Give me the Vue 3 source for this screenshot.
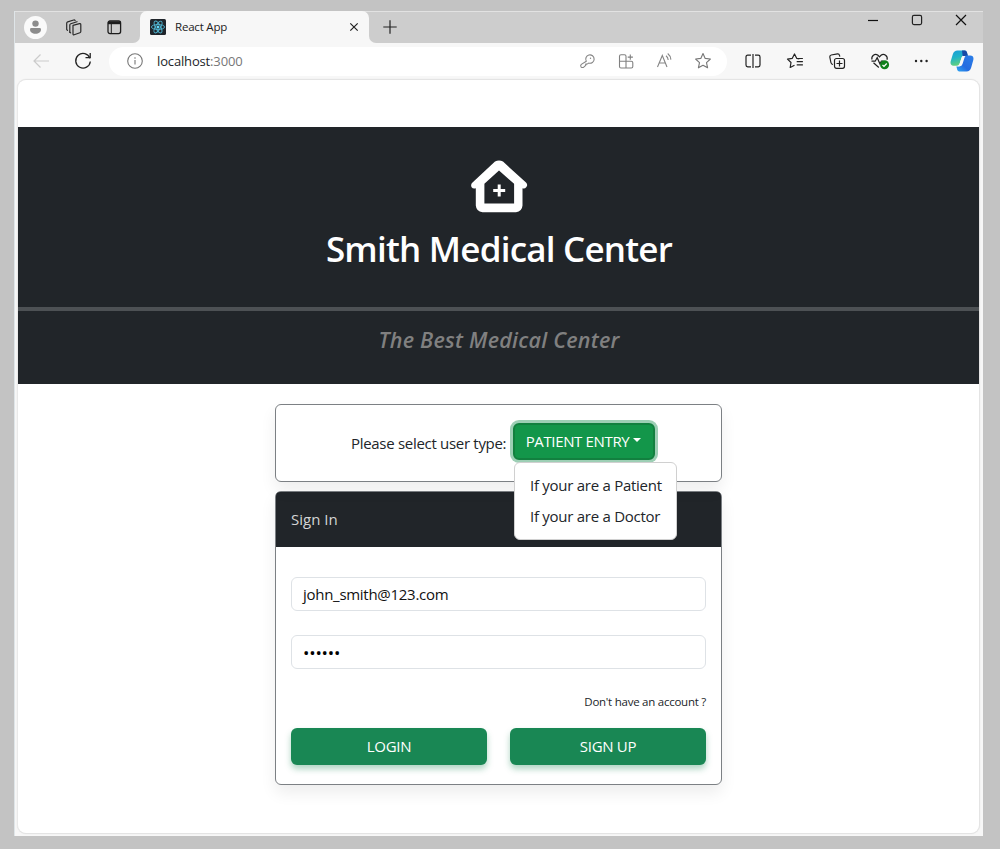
<script setup>
import { ref } from 'vue'

const email = ref('john_smith@123.com')
const password = '••••••'
const userTypes = ['If your are a Patient', 'If your are a Doctor']
</script>

<template>
  <div class="desktop">
    <div class="window">
      <div class="strip">
        <div class="strip-left">
          <span class="avatar">
            <svg width="23" height="23" viewBox="0 0 23 23"><circle cx="11.5" cy="11.5" r="11.5" fill="#fafafa"/><circle cx="11.5" cy="7.6" r="3.2" fill="#8c8c8c"/><path d="M6 13.5q0-1.4 1.4-1.4h8.2q1.4 0 1.4 1.4c0 2.6-2.2 4.2-5.5 4.2S6 16.100 6 13.500z" fill="#8c8c8c"/></svg>
          </span>
          <svg class="work" width="18" height="18" viewBox="0 0 18 18" fill="none" stroke="#2a2a2a" stroke-width="1.2" stroke-linejoin="round" stroke-linecap="round"><path d="M8 6.300l6.500-1.600q1.300-.3 1.300 1v6.800q0 .9-.9 1.200l-5.700 2q-1.200.4-1.200-.8z"/><path d="M4.800 13.200V6q0-1 1-1.300l6.200-2"/><path d="M4.800 13.200l.9.700M1.700 10.500V4.200q0-1 1-1.300l6-1.900q1-.2 1.400.6M1.700 10.500l.8.800"/></svg>
          <svg class="vertical" width="15" height="15" viewBox="0 0 15 15" fill="none" stroke="#1d1d1d" stroke-width="1.300"><rect x="1" y="1" width="12.600" height="12.600" rx="2"/><path d="M1 2.800h12.600" stroke-width="2.800"/><path d="M4.300 4v9.500" stroke-width="1"/></svg>
        </div>
        <div class="tab">
          <svg width="16" height="16" viewBox="0 0 16 16"><rect width="16" height="16" rx="1.500" fill="#20252b"/><g fill="none" stroke="#4fb3cf" stroke-width=".9"><ellipse cx="8" cy="8" rx="6.600" ry="2.500"/><ellipse cx="8" cy="8" rx="6.600" ry="2.500" transform="rotate(60 8 8)"/><ellipse cx="8" cy="8" rx="6.600" ry="2.500" transform="rotate(120 8 8)"/></g><circle cx="8" cy="8" r="1.500" fill="#61dafb"/></svg>
          <span class="tab-title"><span>React App</span></span>
          <svg class="tab-close" width="10" height="10" viewBox="0 0 10 10" stroke="#222" stroke-width="1.200"><path d="M1.300 1.300l7.400 7.400M8.700 1.300L1.300 8.700"/></svg>
        </div>
        <div class="strip-right">
          <svg class="plus" width="14" height="14" viewBox="0 0 14 14" stroke="#222" stroke-width="1.200"><path d="M7 .3v13.400M.3 7h13.400"/></svg>
          <div class="controls">
            <svg width="12" height="12" viewBox="0 0 12 12" stroke="#111" stroke-width="1.200"><path d="M1 6.500h10"/></svg>
            <svg width="12" height="12" viewBox="0 0 12 12" fill="none" stroke="#222" stroke-width="1.200"><rect x="1.400" y="1.400" width="9.200" height="9.200" rx="1.500"/></svg>
            <svg width="12" height="12" viewBox="0 0 12 12" stroke="#111" stroke-width="1.200"><path d="M1 1l10 10M11 1L1 11"/></svg>
          </div>
        </div>
      </div>

      <div class="toolbar">
        <svg class="back" width="18" height="16" viewBox="0 0 18 16" fill="none" stroke="#cbcbcb" stroke-width="1.200"><path d="M17 8H2M8.500 1.500L2 8l6.500 6.500"/></svg>
        <svg class="reload" width="18" height="18" viewBox="0 0 18 18" fill="none" stroke="#222" stroke-width="1.300"><path d="M15.900 6.300A7.300 7.300 0 1 0 16.300 9.500"/><path d="M11.500 5.700h4.700V1"/></svg>
        <div class="address">
          <svg class="info" width="16" height="16" viewBox="0 0 16 16" fill="none" stroke="#777" stroke-width="1.100"><circle cx="8" cy="8" r="7.300"/><path d="M8 7v4.500M8 4.200v1.500"/></svg>
          <span class="url"><span class="host">localhost</span><span class="port">:3000</span></span>
          <div class="address-icons">
            <svg width="18" height="18" viewBox="0 0 18 18" fill="none" stroke="#858585" stroke-width="1.100" stroke-linejoin="round"><path d="M8.300 9.200A4.200 4.200 0 1 1 10.700 11.100L9 12.100H7.700v1.300L5.700 15.200Q4.100 16 3 14.800q-.8-1.200.3-2.400z"/><circle cx="12.500" cy="6.300" r=".7" fill="#858585" stroke="none"/></svg>
            <svg width="18" height="18" viewBox="0 0 18 18" fill="none" stroke="#808080" stroke-width="1.100"><path d="M9 9.300V4.200Q9 2.700 7.500 2.700H4Q2.500 2.700 2.500 4.200v10.300Q2.500 16 4 16h10.300q1.500 0 1.500-1.500v-3.700q0-1.500-1.500-1.500H2.500M9 9.300V16M13.300 2.500v5.200M10.700 5.100h5.200"/></svg>
            <svg width="18" height="18" viewBox="0 0 18 18" fill="none" stroke="#858585" stroke-width="1.100"><path d="M2.500 15L7.300 3.500 12 15M4.200 11h6.200M11 3.800q2 1.500 2.200 4.200M12.700 1.500q2.900 2.300 3.200 6.100"/></svg>
            <svg width="18" height="18" viewBox="0 0 18 18" fill="none" stroke="#777" stroke-width="1.100" stroke-linejoin="round"><path d="M9 1.500l2.200 4.900 5.200.6-3.900 3.600 1.100 5.200L9 13.200l-4.600 2.600 1.100-5.200L1.600 7l5.200-.6z"/></svg>
          </div>
        </div>
        <div class="tools">
          <svg width="18" height="18" viewBox="0 0 18 18" fill="none" stroke="#222" stroke-width="1.200"><path d="M7 3.200H3.700Q2 3.200 2 4.900v8.200q0 1.700 1.700 1.700H7M11 3.200h3.300Q16 3.200 16 4.900v8.200q0 1.700-1.700 1.700H11M9 2v14"/></svg>
          <svg width="18" height="18" viewBox="0 0 18 18" fill="none" stroke="#222" stroke-width="1.200" stroke-linejoin="round"><path d="M13.300 6.800L10.800 6.500 8.500 2 6.300 6.300 1.500 7.100 5 10.500 4.200 15.500l4.300-2.200M10.700 6.500h6.200M10.700 9.700h6.200M10.700 12.900h6.200"/></svg>
          <svg width="18" height="18" viewBox="0 0 18 18" fill="none" stroke="#222" stroke-width="1.200"><rect x="6.500" y="6.500" width="10" height="9.800" rx="2"/><path d="M11.500 8.500v6M8.500 11.500h6M5 12.500Q3.200 12.400 2.900 10.500L1.800 5Q1.600 3.400 3.200 3l6.300-1.100Q11.100 1.700 11.500 3.300l.3 1.400"/></svg>
          <svg width="20" height="18" viewBox="0 0 20 18" fill="none" stroke="#222" stroke-width="1.200"><path d="M2 7.500C1 4 4.800.8 8 3.300l1.500 1.500L11 3.300c3-2.600 7.200.8 6 4.500M1.500 9.200h3.700l2-3.500L10 12l1.400-3h2M3.500 10.800l5.300 4.700"/><circle cx="14.600" cy="12.800" r="4.500" fill="#10801b" stroke="none"/><path d="M12.500 13l1.500 1.500 2.700-3" stroke="#fff"/></svg>
          <svg class="more" width="18" height="18" viewBox="0 0 18 18" fill="#222"><circle cx="4" cy="9" r="1.200"/><circle cx="9.300" cy="9" r="1.200"/><circle cx="14.600" cy="9" r="1.200"/></svg>
        </div>
        <svg class="copilot" width="24" height="22" viewBox="0 0 24 22">
          <defs>
            <linearGradient id="ga" x1="0" y1="0" x2="0.300" y2="1"><stop offset="0" stop-color="#1a9bd8"/><stop offset=".5" stop-color="#20b4c7"/><stop offset="1" stop-color="#63d07e"/></linearGradient>
            <linearGradient id="gb" x1="1" y1="0" x2="0" y2="1"><stop offset="0" stop-color="#2b7fe8"/><stop offset=".6" stop-color="#256be0"/><stop offset="1" stop-color="#2ea9f3"/></linearGradient>
          </defs>
          <path d="M7.500.5h7.300q1.500 0 2.100 2l.7 2.500h-3q-2 0-2.700 2L9.600 13.500q-.8 2.200-2.800 2.200H3.400Q-.2 15.600.7 11.300L2.900 4Q4 .5 7.500.5z" fill="url(#ga)"/>
          <path d="M12 .5h3q1.500 0 2 2l1 3.500h-3.300q-1.300 0-2 .8z" fill="#1749a6"/>
          <path d="M16.500 21.500H9.200q-1.500 0-2-1.800L6.400 16.500h2.200q2.200 0 2.900-2.200l2.200-6.500q.8-2.300 3-2.300h3.500q4 .1 3.100 4.600l-2.100 7.500q-1.100 3.900-4.700 3.900z" fill="url(#gb)"/>
          <path d="M12.700 6h2.800q-.7.700-1 1.800l-2 6.200q-.7 2.300-2.600 2.300H7.300q1.700-.3 2.300-2.300l1.800-6q.4-1.300 1.300-2z" fill="#f7f7f7"/>
        </svg>
      </div>

      <div class="page">
        <header class="hero">
          <div class="hero-main">
            <svg width="58" height="54" viewBox="0 0 58 54"><path fill="#fff" fill-rule="evenodd" d="M25 1.600Q29 -.8 33 1.600L56 22.500Q58.300 25 56.200 27.200 54.800 29 52.500 28.300V45.500Q52 51.500 46 52.200H12.500Q6.300 51.500 5.800 45.500V28.300Q3 29.200 1.600 27.200.3 24.600 2.500 22.500zM29 10.500L14.400 23.800v19.700h29.700V23.800z"/><path d="M29.200 24.500v12M23.200 30.500h12" stroke="#fff" stroke-width="3"/></svg>
            <h1><span>Smith Medical Center</span></h1>
          </div>
          <p class="tagline"><span>The Best Medical Center</span></p>
        </header>

        <main class="column">
          <section class="card selector">
            <span class="prompt">Please select user type:</span>
            <div class="dropdown">
              <button class="toggle"><span>PATIENT ENTRY</span><i class="caret"></i></button>
              <ul class="menu">
                <li v-for="type in userTypes" :key="type"><span>{{ type }}</span></li>
              </ul>
            </div>
          </section>

          <section class="card">
            <div class="card-title"><span>Sign In</span></div>
            <div class="card-body">
              <div class="field"><span class="email">{{ email }}</span></div>
              <div class="field"><span class="dots">{{ password }}</span></div>
              <div class="hint"><span>Don't have an account ?</span></div>
              <div class="actions">
                <button class="btn"><span>LOGIN</span></button>
                <button class="btn"><span>SIGN UP</span></button>
              </div>
            </div>
          </section>
        </main>
      </div>
    </div>
  </div>
</template>

<style>
body { margin: 0; background: #c3c3c3; }
</style>

<style scoped>
* { box-sizing: border-box; }
.desktop { width: 1000px; height: 849px; padding: 11px 17px 13px 14px; background: #c3c3c3; font-family: "Open Sans", "Noto Sans", sans-serif; color: #212529; overflow: hidden; }
.window { height: 825px; display: flex; flex-direction: column; background: #f7f7f7; border-left: 1px solid #dfe5e8; }
svg { display: block; flex: none; }
.strip { height: 32px; display: flex; border-top: 1px solid #e2e2e2; background: linear-gradient(#cdcdcd 50%, #f7f7f7 50%); }
.strip-left { width: 125px; display: flex; align-items: center; background: #cdcdcd; border-radius: 0 0 7px 0; padding-left: 9px; }
.work { margin-left: 18px; }
.vertical { margin-left: 24px; }
.tab { width: 229px; display: flex; align-items: center; background: #f7f7f7; border-radius: 7px 7px 0 0; padding: 0 10px 0 10px; margin-top: -1px; }
.tab-title { margin-left: 9px; margin-top: -1px; flex: 1; font-size: 11.500px; color: #222; letter-spacing: -.2px; }
.strip-right { flex: 1; display: flex; justify-content: space-between; background: #cdcdcd; border-radius: 0 0 0 7px; padding: 8px 16px 0 14px; }
.controls { display: flex; gap: 32px; margin-top: -6px; }
.toolbar { height: 36px; display: flex; align-items: center; padding: 0 9px 0 17px; }
.reload { margin-left: 24px; }
.address { width: 618px; height: 29px; margin-left: 17px; display: flex; align-items: center; padding: 0 15.500px 0 18px; border-radius: 15px; background: #fff; }
.url { margin-left: 14px; font-size: 13px; flex: 1; letter-spacing: -.15px; }
.port { color: #777; }
.address-icons { display: flex; gap: 20.500px; }
.tools { display: flex; margin-left: 17px; gap: 24px; }
.more { margin-left: -2px; }
.copilot { margin-left: auto; }
.page { flex: 1; margin: 0 3px 2px 2px; border: 1px solid #e4e4e4; border-left-color: #e9e9e9; border-radius: 9px; background: #fff; padding-top: 47px; overflow: hidden; box-shadow: 0 0 1px #ddd; }
.hero { margin: 0 -1px 0 0; height: 257px; background: #212529; text-align: center; }
.hero-main { height: 184px; padding-top: 33px; border-bottom: 4px solid #4d5154; display: flex; flex-direction: column; align-items: center; }
h1 { margin: 11px 0 0; font-size: 35px; line-height: 48px; font-weight: 600; color: #fff; letter-spacing: -.78px; white-space: nowrap; }
.tagline { margin: 13px 0 0; font-size: 21.500px; line-height: 32px; font-weight: 600; font-style: italic; color: #808080; letter-spacing: .23px; white-space: nowrap; }
.column { width: 447px; margin: 20px 0 0 257px; }
.card { border: 1px solid #7c8084; border-radius: 6px; background: #fff; box-shadow: 0 8px 16px rgba(0, 0, 0, .07); }
.selector { height: 78px; display: flex; padding: 18px 0 0 75px; margin-bottom: 9px; position: relative; z-index: 2; }
.prompt { width: 162px; line-height: 40px; font-size: 15px; white-space: nowrap; letter-spacing: -.3px; }
.dropdown { position: relative; }
.toggle { width: 142px; height: 37px; display: flex; align-items: center; justify-content: center; border: 2px solid #12803f; border-radius: 6px; background: #13964a; color: #fff; font: 400 15px "Open Sans", sans-serif; box-shadow: 0 0 0 3px #9dcfb5; padding: 0 1px 1px 0; letter-spacing: -.35px; white-space: nowrap; }
.caret { width: 0; height: 0; margin-left: 4px; margin-top: -3px; border: 4px solid transparent; border-top-color: #fff; border-bottom: 0; }
.menu { position: absolute; top: 39px; left: 1px; width: 163px; height: 78px; margin: 0; padding: 7px 0; list-style: none; background: #fff; border: 1px solid #d0d0d0; border-radius: 6px; }
.menu li { height: 31px; line-height: 31px; padding-left: 15px; font-size: 15px; letter-spacing: -.27px; white-space: nowrap; }
.card-title { height: 55px; line-height: 55px; padding-left: 15px; background: #212529; color: #d3d4d5; font-size: 15px; border-radius: 4px 4px 0 0; }
.card-body { height: 237px; padding: 30px 15px 0; }
.field { height: 34px; margin-bottom: 24px; border: 1px solid #dee2e6; border-radius: 6px; display: flex; align-items: center; padding-left: 11px; font-size: 15px; }
.email { letter-spacing: -.28px; color: #111; }
.dots { font-size: 17px; letter-spacing: -.2px; color: #000; }
.hint { height: 20px; line-height: 20px; margin-top: -1px; font-size: 11.500px; letter-spacing: -.25px; text-align: right; }
.actions { display: flex; gap: 23px; margin-top: 16px; }
.btn { flex: 1; height: 37px; border: 0; border-radius: 6px; background: #198754; color: #fff; font: 400 15px "Open Sans", sans-serif; box-shadow: 0 4px 6px rgba(25, 135, 84, .35); letter-spacing: -.3px; padding: 0 0 1px; }
</style>
